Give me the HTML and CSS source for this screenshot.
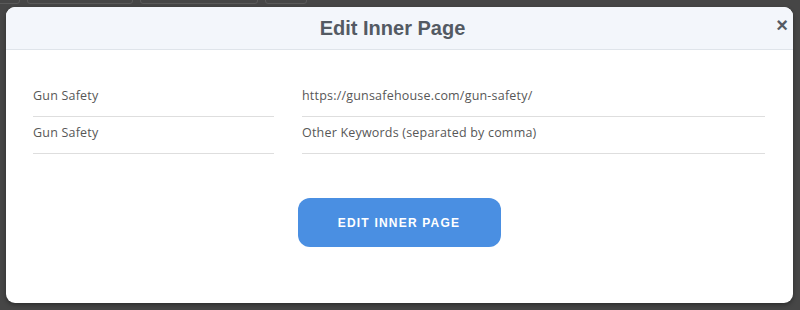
FILE: index.html
```html
<!DOCTYPE html>
<html lang="en">
<head>
    <meta charset="UTF-8">
    <meta name="viewport" content="width=device-width, initial-scale=1.0">
    <title>Edit Inner Page</title>
    <link rel="stylesheet" href="styles.css">
</head>
<body>
    <!-- Page behind the overlay -->
    <div class="backdrop">
        <div class="toolbar">
            <span class="tool tool-a"></span>
            <span class="tool tool-b"></span>
            <span class="tool tool-c"></span>
            <span class="tool tool-d"></span>
        </div>
    </div>

    <!-- Modal -->
    <div class="modal">
        <div class="modal-header">
            <h2>Edit Inner Page</h2>
            <button class="close" type="button">&times;</button>
        </div>
        <div class="modal-body">
            <div class="form-grid">
                <input type="text" class="field" value="Gun Safety">
                <input type="text" class="field" value="https://gunsafehouse.com/gun-safety/">
                <input type="text" class="field" value="Gun Safety">
                <input type="text" class="field" placeholder="Other Keywords (separated by comma)">
            </div>
            <div class="actions">
                <button class="submit" type="button">EDIT INNER PAGE</button>
            </div>
        </div>
    </div>
</body>
</html>
```

FILE: styles.css
```css
body {
    margin: 0;
    height: 310px;
    overflow: hidden;
    background-color: #464646;
    font-family: "Open Sans", sans-serif;
}

.backdrop {
    height: 310px;
}

.toolbar {
    display: flex;
    gap: 7px;
    margin-top: -20px;
}

.tool {
    display: block;
    height: 22px;
    border: 1px solid #5a5a5a;
    border-radius: 3px;
}

.tool-a { width: 28px; margin-left: -10px; }
.tool-b { width: 104px; }
.tool-c { width: 116px; }
.tool-d { width: 40px; }

.modal {
    position: absolute;
    left: 6px;
    top: 7px;
    width: 787px;
    height: 296px;
    background-color: white;
    border-radius: 9px;
    box-shadow: 0 2px 4px rgba(0,0,0,0.35);
    overflow: hidden;
}

.modal-header {
    position: relative;
    height: 42px;
    background-color: #f3f6fb;
    border-bottom: 1px solid #dfe4ea;
    display: flex;
    align-items: center;
    justify-content: center;
    padding-right: 14px;
}

.modal-header h2 {
    margin: 0;
    font-family: "Liberation Sans", Arial, sans-serif;
    font-size: 20px;
    font-weight: bold;
    color: #535a63;
}

.close {
    position: absolute;
    right: 5px;
    top: 8px;
    padding: 0;
    border: none;
    background: none;
    font-family: "Liberation Sans", Arial, sans-serif;
    font-size: 20px;
    font-weight: bold;
    line-height: 20px;
    color: #555b64;
    cursor: pointer;
}

.modal-body {
    padding: 30px 28px 0 27px;
}

.form-grid {
    display: grid;
    grid-template-columns: 241px 1fr;
    column-gap: 28px;
}

.field {
    box-sizing: border-box;
    width: 100%;
    height: 37px;
    padding: 0 0 5px 0;
    border: none;
    border-bottom: 1px solid #dedede;
    outline: none;
    font-family: "Open Sans", sans-serif;
    font-size: 12.5px;
    letter-spacing: 0.2px;
    color: #575757;
    background: none;
}

.field::placeholder {
    color: #575757;
    opacity: 1;
}

.actions {
    display: flex;
    justify-content: center;
    margin-top: 44px;
}

.submit {
    width: 203px;
    height: 49px;
    border: none;
    border-radius: 12px;
    background-color: #4a8fe2;
    color: white;
    font-family: "Liberation Sans", Arial, sans-serif;
    font-size: 12px;
    font-weight: bold;
    letter-spacing: 1.2px;
    cursor: pointer;
}
```
